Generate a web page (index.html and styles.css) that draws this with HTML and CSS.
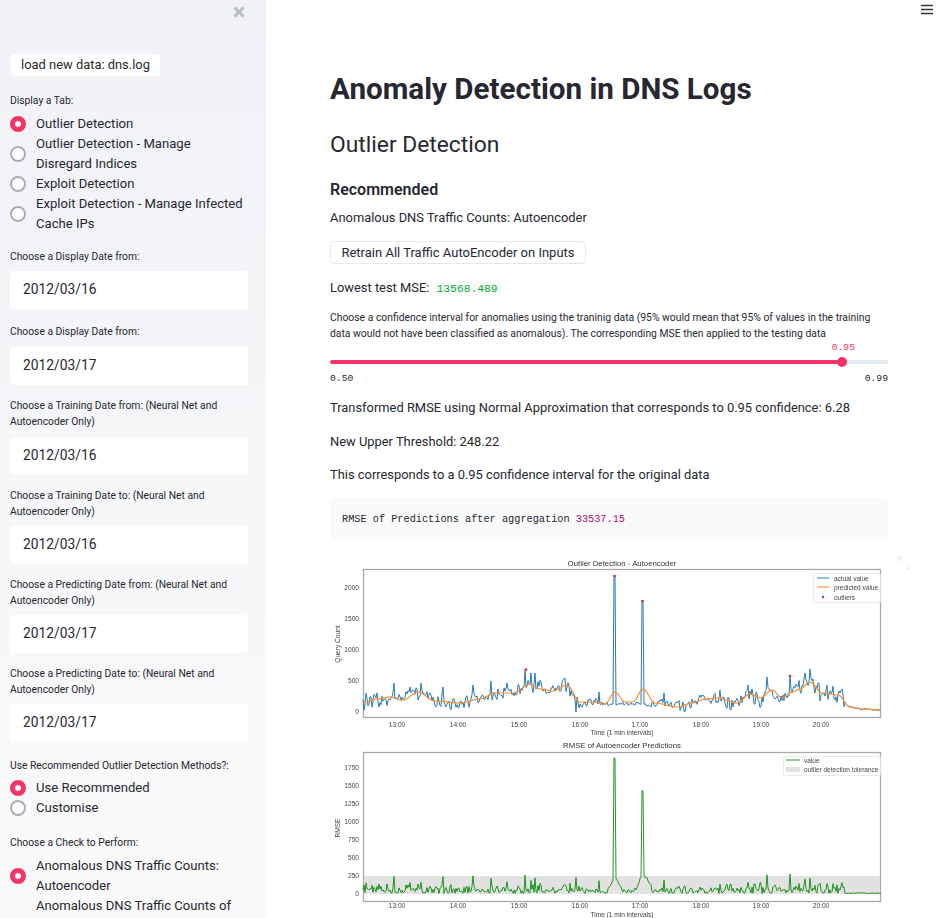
FILE: index.html
```html
<!DOCTYPE html>
<html lang="en">
<head>
<meta charset="utf-8">
<title>Anomaly Detection in DNS Logs</title>
<link rel="stylesheet" href="styles.css">
</head>
<body>
<div class="app">
  <aside class="sidebar">
    <svg class="close" width="12" height="12" viewBox="0 0 12 12"><path d="M1.5 1.5L10.5 10.5M10.5 1.5L1.5 10.5"/></svg>
    <button class="btn btn-load">load new data: dns.log</button>
    <div class="label label-tab">Display a Tab:</div>
    <div class="radios">
      <div class="radio on"><span class="dot"></span><span class="rtext">Outlier Detection</span></div>
      <div class="radio"><span class="dot"></span><span class="rtext">Outlier Detection - Manage Disregard Indices</span></div>
      <div class="radio"><span class="dot"></span><span class="rtext">Exploit Detection</span></div>
      <div class="radio"><span class="dot"></span><span class="rtext">Exploit Detection - Manage Infected Cache IPs</span></div>
    </div>
    <div class="label first">Choose a Display Date from:</div>
    <div class="date">2012/03/16</div>
    <div class="label second">Choose a Display Date from:</div>
    <div class="date">2012/03/17</div>
    <div class="label third">Choose a Training Date from: (Neural Net and Autoencoder Only)</div>
    <div class="date">2012/03/16</div>
    <div class="label">Choose a Training Date to: (Neural Net and Autoencoder Only)</div>
    <div class="date">2012/03/16</div>
    <div class="label">Choose a Predicting Date from: (Neural Net and Autoencoder Only)</div>
    <div class="date">2012/03/17</div>
    <div class="label">Choose a Predicting Date to: (Neural Net and Autoencoder Only)</div>
    <div class="date">2012/03/17</div>
    <div class="label label-use">Use Recommended Outlier Detection Methods?:</div>
    <div class="radios">
      <div class="radio on"><span class="dot"></span><span class="rtext">Use Recommended</span></div>
      <div class="radio"><span class="dot"></span><span class="rtext">Customise</span></div>
    </div>
    <div class="label label-check">Choose a Check to Perform:</div>
    <div class="radios">
      <div class="radio on"><span class="dot"></span><span class="rtext">Anomalous DNS Traffic Counts: Autoencoder</span></div>
      <div class="radio"><span class="dot dot-cut"></span><span class="rtext">Anomalous DNS Traffic Counts of</span></div>
    </div>
  </aside>
  <main class="main">
    <h1>Anomaly Detection in DNS Logs</h1>
    <h2>Outlier Detection</h2>
    <h3>Recommended</h3>
    <p class="line">Anomalous DNS Traffic Counts: Autoencoder</p>
    <button class="btn btn-retrain">Retrain All Traffic AutoEncoder on Inputs</button>
    <p class="line mse">Lowest test MSE: <code>13568.489</code></p>
    <div class="slider-label">Choose a confidence interval for anomalies using the traninig data (95% would mean that 95% of values in the training data would not have been classified as anomalous). The corresponding MSE then applied to the testing data</div>
    <div class="slider">
      <div class="slider-value">0.95</div>
      <div class="track"><div class="fill"><span class="thumb"></span></div></div>
      <div class="slider-ends"><span>0.50</span><span>0.99</span></div>
    </div>
    <p class="line t1">Transformed RMSE using Normal Approximation that corresponds to 0.95 confidence: 6.28</p>
    <p class="line t2">New Upper Threshold: 248.22</p>
    <p class="line t3">This corresponds to a 0.95 confidence interval for the original data</p>
    <pre class="codeblock">RMSE of Predictions after aggregation <span class="num">33537.15</span></pre>
    <div class="figure fig-first">
      <svg class="expand" width="14" height="14" viewBox="0 0 14 14"><path d="M1 1h4L1 5zM13 13H9l4-4zM4 4l2 2M10 10L8 8"/></svg>
      <svg class="plot" width="558" height="184" viewBox="330 555 558 184">
        <text class="title" x="622" y="566">Outlier Detection - Autoencoder</text>
        <rect class="axes" x="363.5" y="569.5" width="517" height="148"/>
        <g class="ticks ylab">
          <text x="359" y="589.5">2000</text><text x="359" y="620.5">1500</text><text x="359" y="651.5">1000</text><text x="359" y="682.5">500</text><text x="359" y="713.5">0</text>
        </g>
        <g class="ticks xlab">
          <text x="397" y="727">13:00</text><text x="458" y="727">14:00</text><text x="519" y="727">15:00</text><text x="580" y="727">16:00</text><text x="640" y="727">17:00</text><text x="701" y="727">18:00</text><text x="761" y="727">19:00</text><text x="821" y="727">20:00</text>
        </g>
        <text class="axis-title" x="622" y="735">Time (1 min intervals)</text>
        <text class="axis-title" transform="translate(340 644) rotate(-90)">Query Count</text>
        <polyline id="actual" class="line-actual"/>
        <polyline id="pred" class="line-pred"/>
        <circle class="outlier" cx="526" cy="669.5" r="1.3"/>
        <circle class="outlier" cx="614.5" cy="576" r="1.3"/>
        <circle class="outlier" cx="642.5" cy="601" r="1.3"/>
        <circle class="outlier" cx="790" cy="676" r="1.3"/>
        <rect class="legend" x="813.5" y="573.5" width="67" height="29" rx="1"/>
        <line class="line-actual" x1="817" x2="829" y1="578" y2="578"/>
        <line class="line-pred wide" x1="817" x2="829" y1="587" y2="587"/>
        <circle class="outlier" cx="823" cy="597" r="1.2"/>
        <g class="leg-text"><text x="834" y="580.5">actual value</text><text x="834" y="590">predicted value</text><text x="834" y="599.5">outliers</text></g>
      </svg>
    </div>
    <div class="figure">
      <svg class="plot" width="558" height="184" viewBox="330 739 558 184">
        <text class="title" x="622" y="748">RMSE of Autoencoder Predictions</text>
        <rect class="axes" x="363.5" y="752.5" width="517" height="149"/>
        <rect class="band" x="364" y="876" width="516" height="18"/>
        <g class="ticks ylab">
          <text x="359" y="769.5">1750</text><text x="359" y="787.5">1500</text><text x="359" y="805.5">1250</text><text x="359" y="824">1000</text><text x="359" y="842">750</text><text x="359" y="860">500</text><text x="359" y="878">250</text><text x="359" y="896">0</text>
        </g>
        <g class="ticks xlab">
          <text x="397" y="908">13:00</text><text x="458" y="908">14:00</text><text x="519" y="908">15:00</text><text x="580" y="908">16:00</text><text x="640" y="908">17:00</text><text x="701" y="908">18:00</text><text x="761" y="908">19:00</text><text x="821" y="908">20:00</text>
        </g>
        <text class="axis-title" x="622" y="917">Time (1 min intervals)</text>
        <text class="axis-title" transform="translate(340 828) rotate(-90)">RMSE</text>
        <polyline id="rmse" class="line-rmse"/>
        <rect class="legend" x="783.5" y="756.5" width="97" height="19" rx="1"/>
        <line class="line-rmse" x1="786" x2="800" y1="760" y2="760"/>
        <rect class="band" x="786" y="767" width="14" height="5"/>
        <g class="leg-text"><text x="804" y="762.5">value</text><text x="804" y="772">outlier detection tolerance</text></g>
      </svg>
    </div>
  </main>
  <svg class="menu" width="14" height="12" viewBox="0 0 14 12"><path d="M1 1.5h12M1 5.5h12M1 9.5h12"/></svg>
</div>
<script src="charts.js"></script>
</body>
</html>
```

FILE: styles.css
```css
html, body { margin: 0; padding: 0; height: 918px; overflow: hidden; background: #fff; }
body { font-family: Roboto, "Noto Sans", sans-serif; color: #262730; font-size: 14px; }
.app { display: flex; height: 918px; position: relative; overflow: hidden; }

.sidebar { flex: 0 0 266px; box-sizing: border-box; height: 918px; padding: 53px 18px 0 10px; overflow: hidden; position: relative; background: linear-gradient(180deg, #f0f2f6 0%, #fafafa 100%); }
.close { position: absolute; left: 233px; top: 6px; }
.close path { stroke: #b9bdc6; stroke-width: 3; fill: none; }

.btn { display: block; box-sizing: border-box; background: #fff; border: 1px solid #e8e9ec; border-radius: 4px; font: inherit; color: #262730; padding: 0; }
.btn-load { width: 151px; height: 24px; font-size: 12.9px; line-height: 22px; border-color: #f0f1f4; }
.label { font-size: 10.3px; line-height: 16px; margin: 13px 0 6px; width: 228px; }
.label-tab { margin: 16px 0 5px; }
.label.first { margin-top: 15px; }
.label.second { margin: 15px 0 7px; }
.label.third { margin-bottom: 7px; }
.label-use { margin: 16px 0 4px; width: 238px; }
.label-check { margin: 17px 0 5px; }
.date { width: 238px; height: 38px; box-sizing: border-box; background: #fff; border-radius: 4px; padding-left: 13px; line-height: 37px; font-size: 13.8px; }

.radios { display: flex; flex-direction: column; }
.radio { display: flex; align-items: center; line-height: 20px; font-size: 13.1px; }
.rtext { margin-left: 10px; width: 212px; }
.dot { flex: 0 0 16px; width: 16px; height: 16px; box-sizing: border-box; border-radius: 50%; background: #fff; border: 2px solid #a9adb8; }
.radio.on .dot { border: 5px solid #f63366; }
.dot-cut { visibility: hidden; }

.main { flex: 1; box-sizing: border-box; padding: 0 52px 0 64px; min-width: 0; }
h1 { font-size: 29.6px; line-height: 36px; font-weight: 700; margin: 71px 0 0; }
h2 { font-size: 22.8px; line-height: 30px; font-weight: 400; margin: 23px 0 0; }
h3 { font-size: 16px; line-height: 22px; font-weight: 600; margin: 19px 0 0; }
.line { font-size: 12.9px; line-height: 20px; margin: 7px 0 0; white-space: nowrap; }
.btn-retrain { width: 256px; height: 23px; margin-top: 13px; font-size: 13px; line-height: 21px; }
.line.mse { margin-top: 14px; }
code { font-family: "Liberation Mono", monospace; font-size: 11.3px; color: #09ab3b; background: #fafafb; padding: 2px 3px; border-radius: 3px; margin-left: 1px; }
.slider-label { font-size: 10.37px; line-height: 16px; margin-top: 11px; }
.slider { position: relative; margin-top: 12px; padding-top: 2px; }
.slider-value { position: absolute; right: 33px; top: -12px; font-family: "Liberation Mono", monospace; font-size: 9.7px; color: #f63366; }
.track { height: 4px; background: #e6eaf1; border-radius: 2px; margin-top: 4px; }
.fill { width: 512px; height: 4px; background: #f63366; border-radius: 2px; position: relative; }
.thumb { position: absolute; right: -5px; top: -3px; width: 10px; height: 10px; border-radius: 50%; background: #f63366; }
.slider-ends { display: flex; justify-content: space-between; margin-top: 9px; font-family: "Liberation Mono", monospace; font-size: 9.7px; line-height: 12px; color: #262730; }
.line.t1 { margin-top: 13px; }
.line.t2 { margin-top: 14px; }
.line.t3 { margin-top: 13px; }
.codeblock { margin: 13px 0 0; height: 42px; box-sizing: border-box; background: #fafafa; border-radius: 4px; padding: 0 12px; line-height: 42px; font-family: "Liberation Mono", monospace; font-size: 10.25px; color: #262730; }
.num { color: #a3156f; }

.figure { height: 184px; position: relative; }
.fig-first { margin-top: 15px; }
.plot { display: block; filter: blur(0.35px); overflow: hidden; font-family: "Liberation Sans", sans-serif; }
.expand { position: absolute; left: 567px; top: 1px; }
.expand path { fill: #eef0f3; stroke: #eef0f3; stroke-width: 1; }
.title { font-size: 7.8px; fill: #333; text-anchor: middle; }
.axes { fill: #fff; stroke: #a8a8a8; stroke-width: 1.3; }
.ticks text { font-size: 6.6px; fill: #444; }
.ylab text { text-anchor: end; }
.xlab text { text-anchor: middle; }
.axis-title { font-size: 6.6px; fill: #444; text-anchor: middle; }
.line-actual { fill: none; stroke: #2a7ab8; stroke-width: 1; }
.line-pred { fill: none; stroke: #ff8c24; stroke-width: 1.2; }
.line-pred.wide { stroke: #ffbe8a; stroke-width: 2; }
.line-rmse { fill: none; stroke: #0d8a0d; stroke-width: 0.9; }
.outlier { fill: #e8202a; }
.band { fill: #e2e2e2; }
.legend { fill: #fff; fill-opacity: 0.85; stroke: #e4e4e4; stroke-width: 0.8; }
.leg-text text { font-size: 6.5px; fill: #444; }

.menu { position: absolute; left: 920px; top: 4px; }
.menu path { stroke: #33343c; stroke-width: 1.4; fill: none; }
```

FILE: charts.js
```js
var predCtl = [[363,703],[377,699],[390,697],[403,700],[418,692],[435,701],[460,703],[480,699],[495,693],[513,693],[530,684],[540,689],[553,691],[567,685],[580,702],[593,702],[605,704],[615,692],[625,702],[633,702],[643,689],[655,703],[677,707],[693,703],[705,699],[718,698],[737,703],[750,694],[760,698],[772,690],[782,698],[792,692],[800,689],[810,682],[822,693],[838,695],[850,707],[862,709],[881,710]];
var peaks = {394:683,410:687,421:683,443:687,473:685,491:681,507:683,525:670,531:673,535:673,565:678,576:712,599:692,748:685,767:677,790:676,805:673,810:669,818:683,827:685,720:690,664:693,700:695};

function predAt(x) {
  for (var i = 1; i < predCtl.length; i++) {
    if (x <= predCtl[i][0]) {
      var a = predCtl[i - 1], b = predCtl[i], t = (x - a[0]) / (b[0] - a[0]);
      t = t * t * (3 - 2 * t);
      return a[1] + (b[1] - a[1]) * t;
    }
  }
  return 710;
}

var seed = 12345;
function rnd() {
  seed = (seed * 16807) % 2147483647;
  return seed / 2147483647;
}

function amp(x) {
  if (x < 585) return 6;
  if (x < 660) return x > 605 && x < 650 ? 1.5 : 3;
  if (x < 845) return x < 720 ? 4.5 : 7;
  return 0.7;
}

var a = [], p = [], r = [];
var held = 0;
for (var x = 363; x <= 881; x++) {
  var py = predAt(x), ay;
  if (x % 2 === 0) held = rnd() - 0.5;
  var n = (held + (rnd() - 0.5) * 0.6) * 2 * amp(x);
  ay = peaks[x] !== undefined ? peaks[x] : py + n;
  if (x >= 600 && x <= 655 && peaks[x] === undefined) ay = 704 + n;
  if (x === 614 || x === 615) ay = 576;
  if (x === 642 || x === 643) ay = 601;
  ay = Math.min(ay, 712);
  a.push(x + "," + ay.toFixed(1));
  p.push(x + "," + py.toFixed(1));
  var dy = Math.abs(ay - py) * 1.166;
  r.push(x + "," + (893.5 - dy).toFixed(1));
}
document.getElementById("actual").setAttribute("points", a.join(" "));
document.getElementById("pred").setAttribute("points", p.join(" "));
document.getElementById("rmse").setAttribute("points", r.join(" "));
```
